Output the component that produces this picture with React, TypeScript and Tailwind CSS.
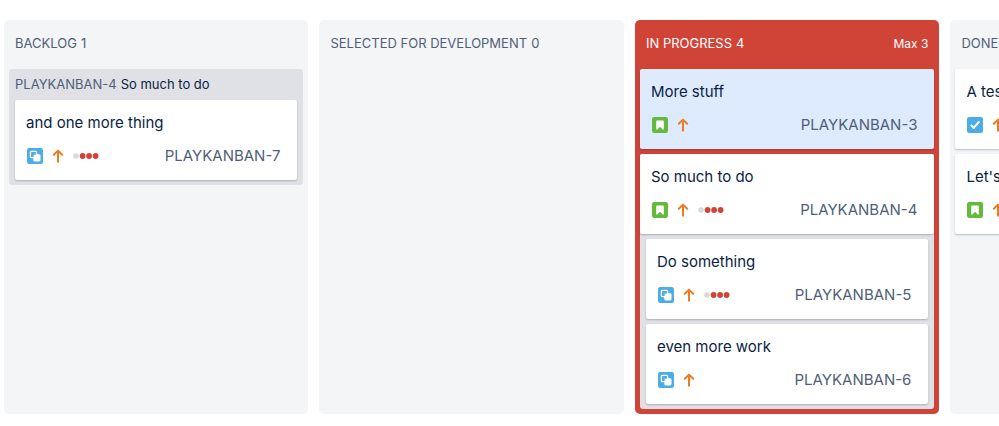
import type { ReactNode } from "react";
import clsx from "clsx";

type IssueType = "story" | "subtask" | "task";

interface Issue {
  id: string;
  summary: string;
  type: IssueType;
  aging?: boolean;
  selected?: boolean;
}

function TypeIcon({ type }: { type: IssueType }) {
  return (
    <svg viewBox="0 0 16 16" className="size-4" role="img" aria-label={type}>
      <rect width="16" height="16" rx="2.2" fill={type === "story" ? "#63ba3c" : "#4bade8"} />
      {type === "story" && (
        <path d="M4.2 4.6c0-.7.4-1.1 1.1-1.1h5.4c.7 0 1.1.4 1.1 1.1V12.6H10.6L8 9.8 5.4 12.6H4.2z" fill="#fff" />
      )}
      {type === "task" && (
        <path d="M4.4 8.6l2.3 2.3 5-5.8" fill="none" stroke="#fff" strokeWidth="2.1" strokeLinecap="round" strokeLinejoin="round" />
      )}
      {type === "subtask" && (
        <>
          <rect x="3.4" y="3.4" width="6.2" height="6.2" rx="1" fill="none" stroke="#fff" strokeWidth="1.3" />
          <rect x="6.3" y="6.3" width="7.2" height="7.2" rx="1.4" fill="#fff" />
          <path d="M6.2 8.9V6.9c0-.4.3-.7.7-.7h2" fill="none" stroke="#4bade8" strokeWidth=".7" />
        </>
      )}
    </svg>
  );
}

function PriorityIcon() {
  return (
    <svg viewBox="0 0 16 16" className="size-4" role="img" aria-label="priority">
      <path
        d="M8 13.8V2.8M3.8 6.8L8 2.6l4.2 4.2"
        fill="none"
        stroke="#ea7d24"
        strokeWidth="2"
        strokeLinecap="round"
        strokeLinejoin="round"
      />
    </svg>
  );
}

function AgingDots() {
  return (
    <svg viewBox="0 0 26 6" className="h-[6px] w-[26px]" role="img" aria-label="days in column">
      <circle cx="3" cy="3" r="2.8" fill="#d9d9dc" />
      <circle cx="9.6" cy="3" r="2.9" fill="#d04437" />
      <circle cx="16.1" cy="3" r="2.9" fill="#d04437" />
      <circle cx="22.6" cy="3" r="2.9" fill="#d04437" />
    </svg>
  );
}

function Card({ issue }: { issue: Issue }) {
  return (
    <article
      className={clsx(
        "flex h-20 flex-col justify-between rounded-[2px] pt-[13px] pr-[17px] pb-3 pl-[11px] shadow-[0_1px_2px_rgba(9,30,66,0.25)]",
        issue.selected ? "bg-[#deebff]" : "bg-white",
      )}
    >
      <h3 className="truncate text-[15px] leading-5 text-[#091e42]">{issue.summary}</h3>
      <div className="flex h-6 items-center gap-[7px] pl-px">
        <TypeIcon type={issue.type} />
        <PriorityIcon />
        {issue.aging && <AgingDots />}
        <a href={`#${issue.id}`} className="ml-auto text-[15px] leading-5 text-[#505f79]">
          {issue.id}
        </a>
      </div>
    </article>
  );
}

interface ColumnProps {
  name: string;
  count: number;
  max?: number;
  children?: ReactNode;
}

function Column({ name, count, max, children }: ColumnProps) {
  const over = max !== undefined && count > max;

  return (
    <section
      className={clsx(
        "w-[30.6%] shrink-0 rounded-[5px] px-[5px] pb-[5px]",
        over ? "bg-[#d04437] text-white" : "bg-[#f4f5f7] text-[#505f79]",
      )}
    >
      <header className="flex h-[49px] items-center justify-between px-[6px] pb-[2px] text-[13px]">
        <h2 className="flex gap-1 whitespace-nowrap uppercase">
          {name} <span>{count}</span>
        </h2>
        {max !== undefined && <span className="text-xs">Max {max}</span>}
      </header>
      {children}
    </section>
  );
}

export default function App() {
  return (
    <main className="flex gap-[11px] overflow-hidden bg-white pt-5 pl-1 font-['Inter',sans-serif]">
      <Column name="Backlog" count={1}>
        <div className="rounded-[3px] bg-[#dfe1e6] px-[6px] pb-[5px]">
          <p className="flex h-[31px] items-center gap-1 text-[13px] text-[#091e42]">
            <a href="#PLAYKANBAN-4" className="text-[#505f79]">
              PLAYKANBAN-4
            </a>
            So much to do
          </p>
          <Card issue={{ id: "PLAYKANBAN-7", summary: "and one more thing", type: "subtask", aging: true }} />
        </div>
      </Column>
      <Column name="Selected for development" count={0} />
      <Column name="In progress" count={4} max={3}>
        <Card issue={{ id: "PLAYKANBAN-3", summary: "More stuff", type: "story", selected: true }} />
        <div className="mt-[5px] rounded-[3px] bg-[#dfe1e6]">
          <Card issue={{ id: "PLAYKANBAN-4", summary: "So much to do", type: "story", aging: true }} />
          <div className="flex flex-col gap-[5px] px-[6px] py-[5px]">
            <Card issue={{ id: "PLAYKANBAN-5", summary: "Do something", type: "subtask", aging: true }} />
            <Card issue={{ id: "PLAYKANBAN-6", summary: "even more work", type: "subtask" }} />
          </div>
        </div>
      </Column>
      <Column name="Done" count={2}>
        <div className="flex flex-col gap-[5px]">
          <Card issue={{ id: "PLAYKANBAN-1", summary: "A test task", type: "task" }} />
          <Card issue={{ id: "PLAYKANBAN-2", summary: "Let's do this", type: "story" }} />
        </div>
      </Column>
    </main>
  );
}
